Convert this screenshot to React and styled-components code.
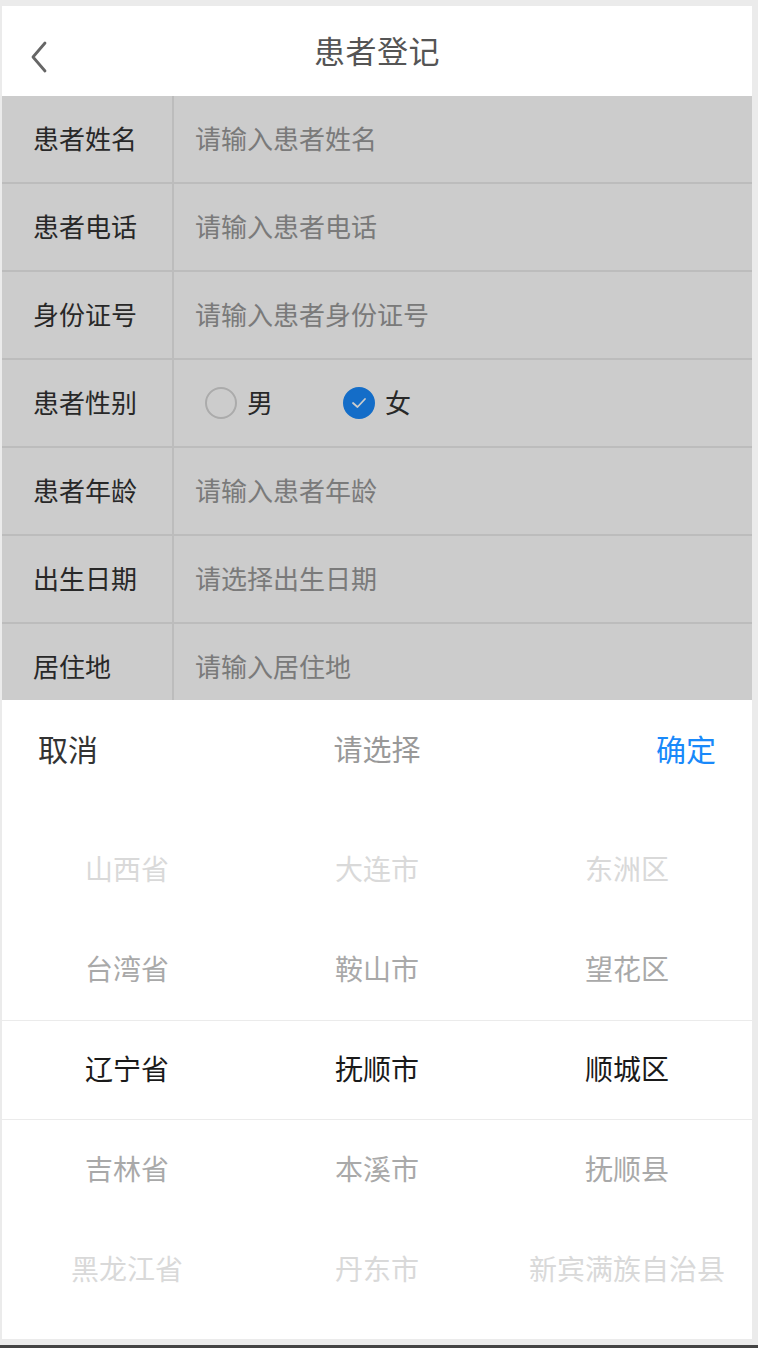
import React, { useState } from "react";
import styled, { createGlobalStyle } from "styled-components";

const GlobalStyle = createGlobalStyle`
  html, body {
    margin: 0;
    padding: 0;
    background: #ebebeb;
  }
  body {
    font-family: "Noto Sans CJK SC", "Noto Sans", sans-serif;
  }
`;

const fields = [
  { label: "患者姓名", placeholder: "请输入患者姓名" },
  { label: "患者电话", placeholder: "请输入患者电话" },
  { label: "身份证号", placeholder: "请输入患者身份证号" },
  { label: "患者性别", type: "radio" },
  { label: "患者年龄", placeholder: "请输入患者年龄" },
  { label: "出生日期", placeholder: "请选择出生日期" },
  { label: "居住地", placeholder: "请输入居住地" },
];

const columns = [
  ["山西省", "台湾省", "辽宁省", "吉林省", "黑龙江省"],
  ["大连市", "鞍山市", "抚顺市", "本溪市", "丹东市"],
  ["东洲区", "望花区", "顺城区", "抚顺县", "新宾满族自治县"],
];

function BackIcon() {
  return (
    <svg width="18" height="32" viewBox="0 0 18 32">
      <path d="M15 2 L3 16 L15 30" fill="none" stroke="#666" strokeWidth="2.8" strokeLinecap="round" strokeLinejoin="round" />
    </svg>
  );
}

function App() {
  const [gender, setGender] = useState("female");

  return (
    <Page>
      <GlobalStyle />
      <Screen>
        <Header>
          <Back><BackIcon /></Back>
          <Title>患者登记</Title>
        </Header>
        <Body>
          <Form>
            {fields.map((f) => (
              <Row key={f.label}>
                <Label>{f.label}</Label>
                <Field>
                  {f.type === "radio" ? (
                    <RadioGroup>
                      <RadioItem onClick={() => setGender("male")}>
                        <RadioDot checked={gender === "male"}>
                          {gender === "male" && <Check />}
                        </RadioDot>
                        男
                      </RadioItem>
                      <RadioItem onClick={() => setGender("female")}>
                        <RadioDot checked={gender === "female"}>
                          {gender === "female" && <Check />}
                        </RadioDot>
                        女
                      </RadioItem>
                    </RadioGroup>
                  ) : (
                    <Input placeholder={f.placeholder} />
                  )}
                </Field>
              </Row>
            ))}
          </Form>
          <Overlay />
          <Popup>
            <Toolbar>
              <ToolButton>取消</ToolButton>
              <ToolTitle>请选择</ToolTitle>
              <ToolButton confirm>确定</ToolButton>
            </Toolbar>
            <Columns>
              {columns.map((col, ci) => (
                <Column key={ci}>
                  {col.map((item, i) => (
                    <Item key={item} distance={Math.abs(i - 2)}>{item}</Item>
                  ))}
                </Column>
              ))}
              <SelectFrame />
            </Columns>
          </Popup>
        </Body>
      </Screen>
      <HomeBar />
    </Page>
  );
}

function Check() {
  return (
    <svg width="16" height="12" viewBox="0 0 16 12">
      <path d="M2 6 L6.5 10 L14 2" fill="none" stroke="#fff" strokeWidth="1.8" strokeLinecap="round" strokeLinejoin="round" />
    </svg>
  );
}

const Page = styled.div`
  width: 758px;
  height: 1348px;
  padding-top: 6px;
  box-sizing: border-box;
  display: flex;
  flex-direction: column;
  background: #ebebeb;
`;

const Screen = styled.div`
  margin: 0 6px 0 2px;
  height: 1333px;
  background: #fff;
  display: flex;
  flex-direction: column;
  overflow: hidden;
`;

const HomeBar = styled.div`
  margin-top: 6px;
  height: 3px;
  background: #444;
`;

const Header = styled.div`
  height: 90px;
  flex-shrink: 0;
  display: flex;
  align-items: center;
  justify-content: center;
  position: relative;
  background: #fff;
`;

const Back = styled.div`
  position: absolute;
  left: 28px;
  top: 35px;
  display: flex;
`;

const Title = styled.div`
  font-size: 31px;
  color: #555;
  letter-spacing: 0.5px;
  padding-bottom: 3px;
`;

const Body = styled.div`
  flex: 1;
  position: relative;
  overflow: hidden;
`;

const Form = styled.div`
  background: #fff;
`;

const Row = styled.div`
  height: 86px;
  display: flex;
  border-bottom: 2px solid #ebebeb;
`;

const Label = styled.div`
  width: 139px;
  padding-left: 31px;
  padding-bottom: 4px;
  border-right: 2px solid #ebebeb;
  display: flex;
  align-items: center;
  font-size: 26px;
  color: #333;
`;

const Field = styled.div`
  flex: 1;
  display: flex;
  align-items: center;
  padding-left: 21px;
  padding-bottom: 4px;
`;

const Input = styled.input`
  border: none;
  outline: none;
  background: transparent;
  font-family: inherit;
  font-size: 26px;
  color: #333;
  width: 100%;
  padding: 0;
  &::placeholder {
    color: #999;
  }
`;

const RadioGroup = styled.div`
  display: flex;
  align-items: center;
  gap: 70px;
  padding-left: 10px;
`;

const RadioItem = styled.div`
  display: flex;
  align-items: center;
  gap: 10px;
  font-size: 26px;
  color: #333;
  cursor: pointer;
`;

const RadioDot = styled.span`
  width: 32px;
  height: 32px;
  margin-top: 3px;
  border-radius: 50%;
  box-sizing: border-box;
  display: flex;
  align-items: center;
  justify-content: center;
  background: ${(p) => (p.checked ? "#1989fa" : "#fff")};
  border: 2px solid ${(p) => (p.checked ? "#1989fa" : "#d6d6d6")};
`;

const Overlay = styled.div`
  position: absolute;
  inset: 0;
  background: rgba(0, 0, 0, 0.2);
`;

const Popup = styled.div`
  position: absolute;
  left: 0;
  right: 0;
  bottom: 0;
  height: 639px;
  background: #fff;
`;

const Toolbar = styled.div`
  height: 96px;
  padding: 0 36px 4px;
  display: flex;
  align-items: center;
  justify-content: space-between;
`;

const ToolButton = styled.div`
  font-size: 30px;
  color: ${(p) => (p.confirm ? "#1989fa" : "#333")};
  cursor: pointer;
`;

const ToolTitle = styled.div`
  font-size: 29px;
  color: #999;
`;

const Columns = styled.div`
  margin-top: 20px;
  display: grid;
  grid-template-columns: repeat(3, 1fr);
  position: relative;
`;

const Column = styled.div`
  display: flex;
  flex-direction: column;
`;

const itemColors = ["#1a1a1a", "#a9a9a9", "#d9d9d9"];

const Item = styled.div`
  height: 96px;
  padding-bottom: 4px;
  display: flex;
  align-items: center;
  justify-content: center;
  font-size: 28px;
  white-space: nowrap;
  color: ${(p) => itemColors[p.distance]};
`;

const SelectFrame = styled.div`
  position: absolute;
  left: 0;
  right: 0;
  top: 200px;
  height: 100px;
  box-sizing: border-box;
  border-top: 1px solid #ebebeb;
  border-bottom: 1px solid #ebebeb;
  pointer-events: none;
`;

export default App;
